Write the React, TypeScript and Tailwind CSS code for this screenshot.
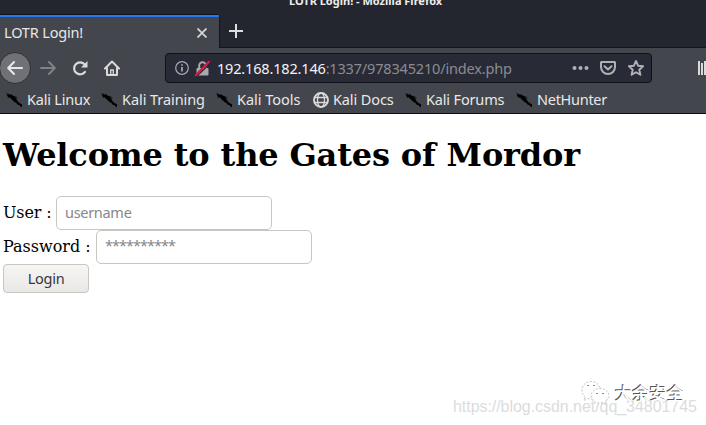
import React from "react";

const UI = "font-['Noto_Sans','Open_Sans',sans-serif]";
const SERIF = "font-['DejaVu_Serif',serif]";

function Dragon() {
  return (
    <svg className="-ml-px mr-px w-4 h-4 shrink-0" viewBox="0 0 16 16" fill="#000">
      <path d="M0 .500l1.200 1 1.800.4.8.8 1.500-.4 1.200 1.200 2.200.8.6 1.300 1.400 1.300.2 1.400 1.500 1.600 1 1.200 3.200 1.300-.5 1.200.9 1.600-2-.3-1.400-1.700-1.900-.4-1.500-2-1.900-.7-1.200-1.700-1.400-.7-.6-1.200-1.400-1-1.300.2L3 5.400l-1.800.2 1-.8L.4 3.400l1.300-.2z" />
      <path d="M7.500 3.600l3 1.200 1.600 1.800-2.400-.9z" opacity=".6" />
    </svg>
  );
}

function Globe() {
  return (
    <svg className="w-4 h-4 shrink-0" viewBox="0 0 16 16" fill="none" stroke="#dadadb">
      <circle cx="8" cy="8" r="7" strokeWidth="1.9" />
      <ellipse cx="8" cy="8" rx="3.500" ry="7" strokeWidth="1.300" />
      <path d="M1 5.500h14M1 10.500h14" strokeWidth="1.300" />
    </svg>
  );
}

const bookmarks = [
  { label: "Kali Linux", box: "w-[95px]", text: "tracking-[-0.22px]" },
  { label: "Kali Training", box: "w-[115px]", text: "tracking-[-0.07px]" },
  { label: "Kali Tools", box: "w-[96px]", text: "tracking-[-0.03px]" },
  { label: "Kali Docs", box: "w-[93px]", text: "tracking-[-0.12px]", globe: true },
  { label: "Kali Forums", box: "w-[111px]", text: "tracking-[-0.16px]" },
  { label: "NetHunter", box: "w-[100px]", text: "tracking-[-0.28px]" },
];

function TabStrip() {
  return (
    <div className="relative flex h-12 items-end bg-[#23252f]">
      <div className="absolute top-[-7px] left-[289px] h-4 leading-4 text-[11px] font-bold text-[#eeeeec] whitespace-nowrap">
        LOTR Login! - Mozilla Firefox
      </div>
      <div className="flex h-[33px] w-[219px] items-center border-t-2 border-[#2778ee] bg-[#43464c] pl-1 pr-3 shadow-[0_-1px_0_#14151d]">
        <span className="mb-[2px] grow text-[14.5px] leading-5 tracking-[-0.17px] text-[#e8e8e8]">LOTR Login!</span>
        <svg className="w-[10px] h-[10px]" viewBox="0 0 10 10" stroke="#d4d4d5" strokeWidth="1.800">
          <path d="M.5.500l9 9M9.500.500l-9 9" />
        </svg>
      </div>
      <div className="flex h-[33px] grow border-l border-b border-[#14151d] pl-[9px] pt-[9px]">
        <svg className="w-[14px] h-[14px]" viewBox="0 0 14 14" stroke="#dedee0" strokeWidth="2">
          <path d="M7 0v14M0 7h14" />
        </svg>
      </div>
    </div>
  );
}

function NavBar() {
  return (
    <div className="flex h-10 items-center overflow-hidden bg-[#43464c]">
      <div className="-ml-[1px] flex size-8 shrink-0 items-center justify-center rounded-full border border-[#2e3036] bg-[#707177]">
        <svg className="size-4" viewBox="0 0 16 16" fill="none" stroke="#e8e8e9" strokeWidth="2" strokeLinecap="round" strokeLinejoin="round">
          <path d="M15 8H1.500M7 2L1.200 8 7 14" />
        </svg>
      </div>
      <svg className="ml-[9px] size-4 shrink-0" viewBox="0 0 16 16" fill="none" stroke="#818287" strokeWidth="2" strokeLinecap="round" strokeLinejoin="round">
        <path d="M1 8h13.500M9 2l5.800 6L9 14" />
      </svg>
      <svg className="ml-4 size-4 shrink-0" viewBox="0 0 16 16" fill="none" stroke="#dadadb" strokeWidth="2.200" strokeLinecap="round">
        <path d="M13 11.800A6 6 0 1 1 12.500 4.200" />
        <path d="M15.500 1v6.500H9z" fill="#dadadb" stroke="none" />
      </svg>
      <svg className="ml-4 size-4 shrink-0" viewBox="0 0 16 16" fill="none" stroke="#dadadb" strokeWidth="2" strokeLinecap="round" strokeLinejoin="round">
        <path d="M1 8.500L8 1.500l7 7M3 8v7h10V8" />
        <path d="M6.700 15v-5h2.600v5z" strokeWidth="1.300" />
      </svg>
      <div className="ml-[45px] flex h-[30px] w-[487px] shrink-0 items-center rounded-[4px] border border-[#101118] bg-[#282a35] pl-[9px]">
        <svg className="size-[14px] shrink-0" viewBox="0 0 14 14" fill="none" stroke="#a9aaae">
          <circle cx="7" cy="7" r="6.300" strokeWidth="1.200" />
          <path d="M7 6v4.500M7 3.200v1.600" strokeWidth="1.700" />
        </svg>
        <svg className="ml-[6px] size-[15px] shrink-0 overflow-visible" viewBox="0 0 15 15" fill="none">
          <path d="M4.200 8V4.500a3.300 3.300 0 0 1 6.600 0V8" stroke="#a9aaae" strokeWidth="2" />
          <rect x="1.500" y="7" width="12" height="7.500" rx="1" fill="#a9aaae" />
          <path d="M1.500 15.500L15 2.500" stroke="#282a35" strokeWidth="1.200" />
          <path d="M.8 14.200L14 .8" stroke="#ef0e42" strokeWidth="2.300" strokeLinecap="round" />
        </svg>
        <div className="mb-px ml-[7px] w-[355px] text-[14.5px] leading-5 tracking-[-0.17px] text-[#8b8c93] whitespace-nowrap">
          <span className="text-[#f3f3f4]">192.168.182.146</span>:1337/978345210/index.php
        </div>
        <svg className="h-4 w-[17px] shrink-0" viewBox="0 0 17 16" fill="#b1b1b5">
          <circle cx="2.500" cy="8" r="2" />
          <circle cx="8.500" cy="8" r="2" />
          <circle cx="14.500" cy="8" r="2" />
        </svg>
        <svg className="ml-[11px] size-4 shrink-0" viewBox="0 0 16 16" fill="none" stroke="#b1b1b5" strokeWidth="2" strokeLinecap="round" strokeLinejoin="round">
          <path d="M1.500 2h13a.6.6 0 0 1 .5.500V7A7 7 0 0 1 1 7V2.500a.6.6 0 0 1 .5-.5zM4.500 6.200L8 9.500l3.500-3.300" />
        </svg>
        <svg className="ml-3 size-4 shrink-0" viewBox="0 0 16 16" fill="none" stroke="#b1b1b5" strokeWidth="1.900" strokeLinejoin="round">
          <path d="M8 1l2.100 4.700 5 .5-3.800 3.500 1.100 5.100L8 12.200l-4.400 2.600 1.100-5.100L.9 6.200l5-.5z" />
        </svg>
      </div>
      <svg className="ml-[46px] h-4 w-4 shrink-0" viewBox="0 0 16 16" fill="#dadadb">
        <path d="M0 1h2v14H0zM3 3h2v12H3zM6 1h2v14H6zM9 3l2-1 4 12-2 1z" />
      </svg>
    </div>
  );
}

const field = `h-[34px] w-[216px] rounded-[5px] border border-[#c9c5bf] bg-white px-2 text-[14.5px] placeholder:text-[#85878a] ${UI}`;

export default function App() {
  return (
    <div className="relative h-[425px] w-[706px] overflow-hidden bg-white">
      <header className={UI}>
        <TabStrip />
        <NavBar />
        <nav className="flex h-[26px] border-b border-[#0c0d12] bg-[#43464c] pl-[7px]">
          {bookmarks.map((b) => (
            <div key={b.label} className={`flex h-6 shrink-0 items-center gap-1 ${b.box}`}>
              {b.globe ? <Globe /> : <Dragon />}
              <span className={`mb-[2px] text-[14.5px] leading-5 whitespace-nowrap text-[#e8e8e8] ${b.text}`}>{b.label}</span>
            </div>
          ))}
        </nav>
      </header>
      <main className={`pl-[3px] text-black ${SERIF}`}>
        <h1 className="pt-[22px] text-[32px] leading-[38px] font-bold tracking-[-0.16px] whitespace-nowrap">Welcome to the Gates of Mordor</h1>
        <form className="pt-[22px] text-[16px]" onSubmit={(e) => e.preventDefault()}>
          <label className="flex h-[34px] items-center">
            <span className="w-[53px] tracking-[-0.15px] whitespace-nowrap">User :</span>
            <input placeholder="username" className={`pb-[2px] tracking-[-0.3px] ${field}`} />
          </label>
          <label className="flex h-[34px] items-center">
            <span className="w-[93px] whitespace-nowrap">Password :</span>
            <input placeholder="**********" className={`pb-[4px] tracking-[-0.99px] ${field}`} />
          </label>
          <button className={`block h-[29px] w-[86px] rounded-[4px] border border-[#c9c5bf] bg-linear-to-b from-[#f6f5f4] to-[#e9e8e6] pb-[2px] text-[14.5px] leading-5 tracking-[-0.25px] text-[#33383c] ${UI}`}>
            Login
          </button>
        </form>
      </main>
      <div className="absolute top-[397px] left-[453px] font-['Liberation_Sans',sans-serif] text-[16px] leading-5 tracking-[-0.05px] whitespace-nowrap text-[#dcdcdc]">
        https://blog.csdn.net/qq_34801745
      </div>
      <div className="absolute top-[380px] left-[581px] flex items-center gap-[5px]">
        <svg className="h-[25px] w-[29px]" viewBox="0 0 29 25" fill="#fff" stroke="#b5b5b5" strokeWidth=".8" strokeDasharray="2 1.500">
          <path d="M4 17.500l-1 3 3.500-2c9 2 13-3 13-8C19 5 15 1.500 10 1.500S1 5 1 10c0 3 1 5.500 3 7.500z" />
          <path d="M24.500 21l1 3-3.500-1.500c-7 2-12-2-12-6.500 0-4 3.500-7.500 9-7.500s9 3.500 9 7.500c0 2-1 3.500-3.500 5z" />
          <path d="M7 5v1M13 5v1M16 13v1M22 13v1" stroke="#666" strokeWidth="1.500" strokeDasharray="none" />
        </svg>
        <span className="font-['Noto_Sans_CJK_SC',sans-serif] text-[17.300px] leading-6 font-medium whitespace-nowrap text-white [text-shadow:-1px_-1px_0_#555]">大余安全</span>
      </div>
    </div>
  );
}
